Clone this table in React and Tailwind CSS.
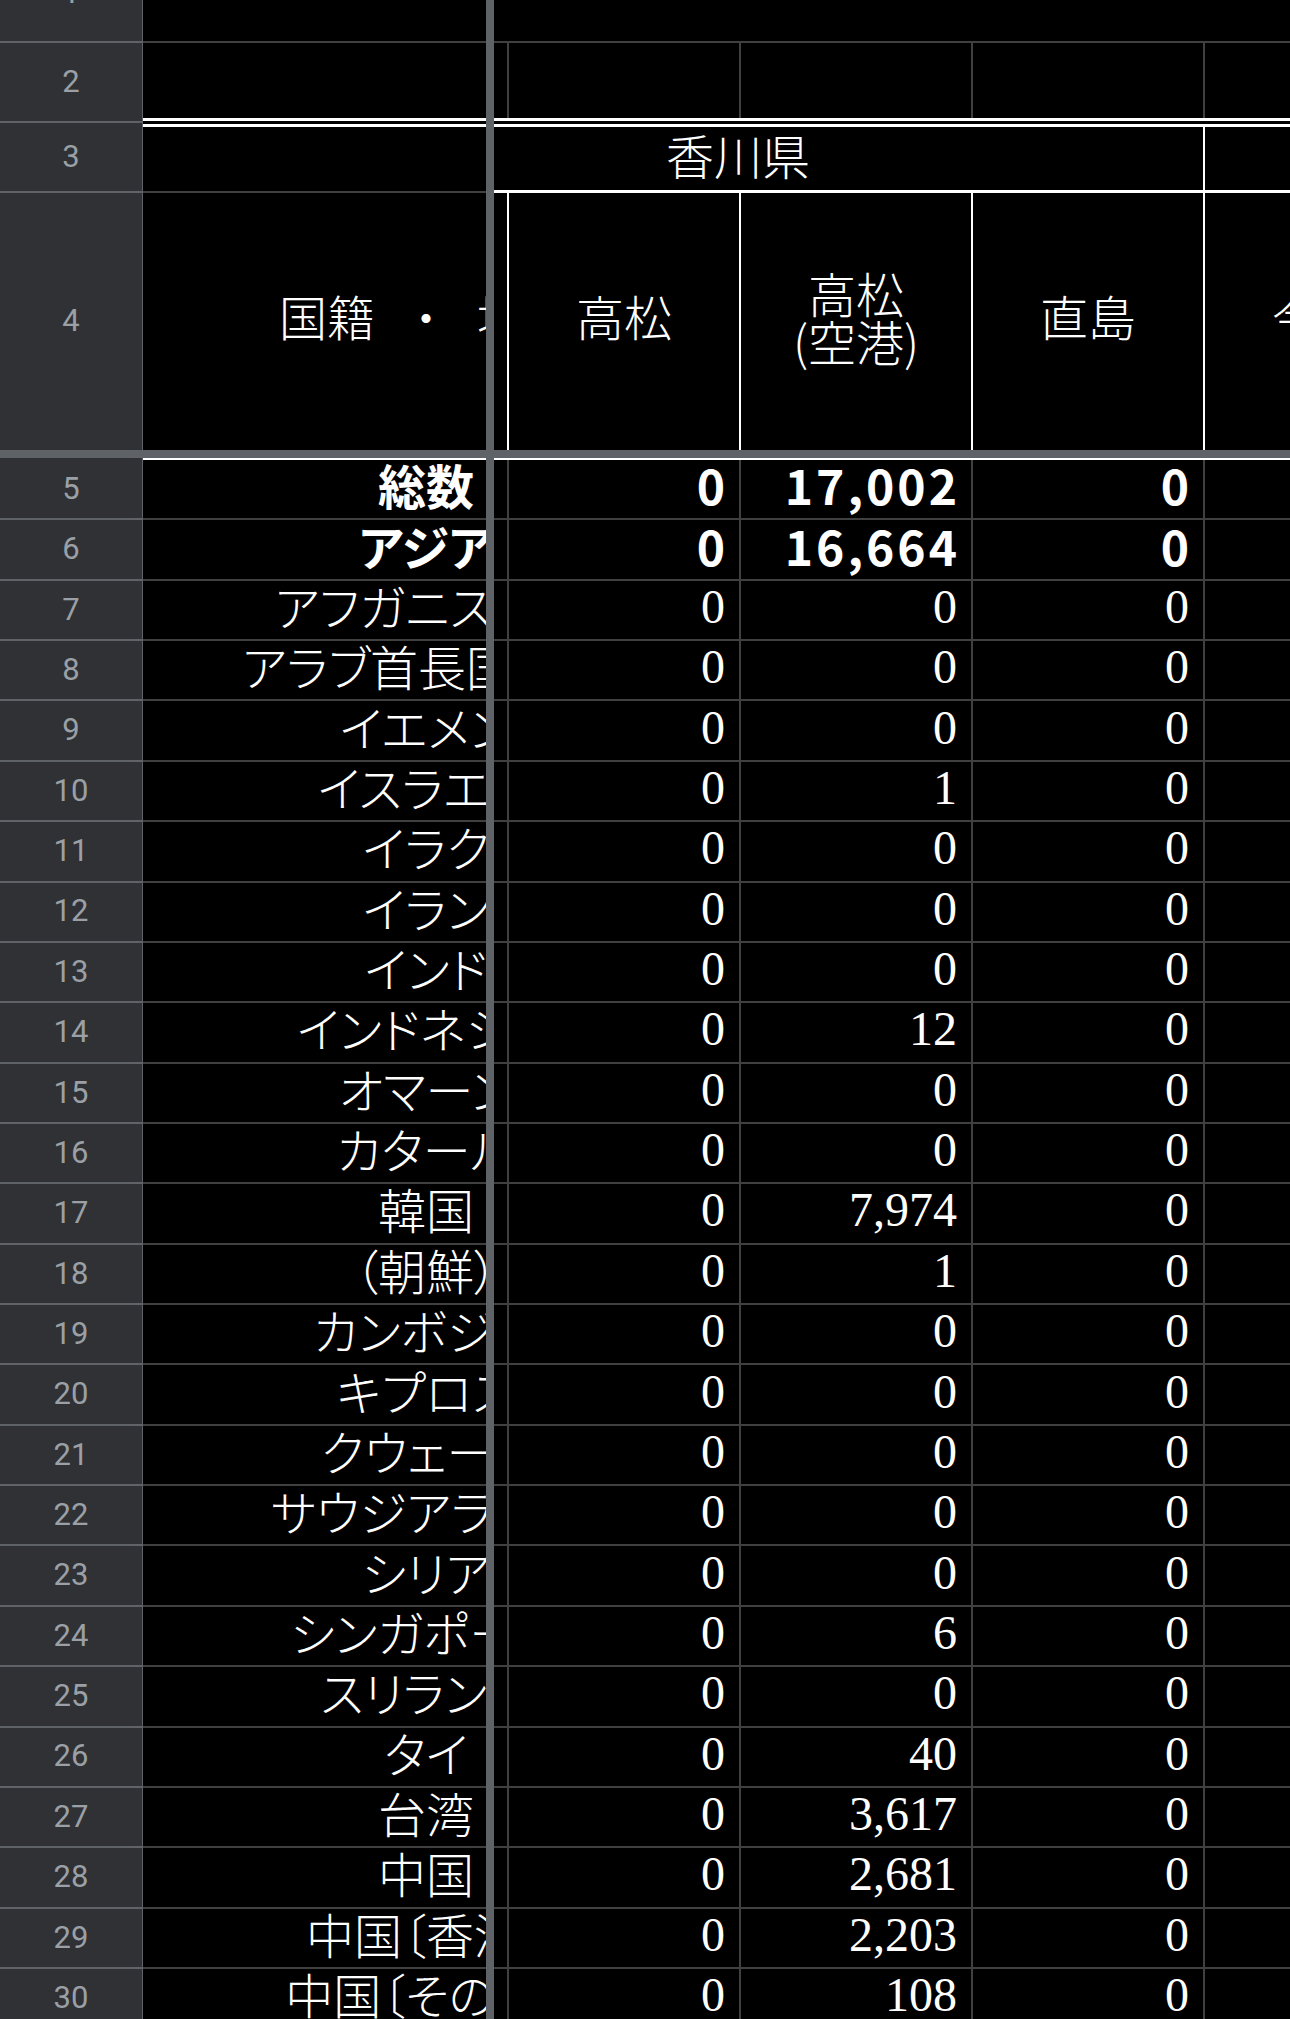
const rows = [
  { n: 5, label: '総数', v: ['0', '17,002', '0'], bold: true },
  { n: 6, label: 'アジア', v: ['0', '16,664', '0'], bold: true },
  { n: 7, label: 'アフガニスタン', v: ['0', '0', '0'] },
  { n: 8, label: 'アラブ首長国連邦', v: ['0', '0', '0'] },
  { n: 9, label: 'イエメン', v: ['0', '0', '0'] },
  { n: 10, label: 'イスラエル', v: ['0', '1', '0'] },
  { n: 11, label: 'イラク', v: ['0', '0', '0'] },
  { n: 12, label: 'イラン', v: ['0', '0', '0'] },
  { n: 13, label: 'インド', v: ['0', '0', '0'] },
  { n: 14, label: 'インドネシア', v: ['0', '12', '0'] },
  { n: 15, label: 'オマーン', v: ['0', '0', '0'] },
  { n: 16, label: 'カタール', v: ['0', '0', '0'] },
  { n: 17, label: '韓国', v: ['0', '7,974', '0'] },
  { n: 18, label: '（朝鮮）', v: ['0', '1', '0'] },
  { n: 19, label: 'カンボジア', v: ['0', '0', '0'] },
  { n: 20, label: 'キプロス', v: ['0', '0', '0'] },
  { n: 21, label: 'クウェート', v: ['0', '0', '0'] },
  { n: 22, label: 'サウジアラビア', v: ['0', '0', '0'] },
  { n: 23, label: 'シリア', v: ['0', '0', '0'] },
  { n: 24, label: 'シンガポール', v: ['0', '6', '0'] },
  { n: 25, label: 'スリランカ', v: ['0', '0', '0'] },
  { n: 26, label: 'タイ', v: ['0', '40', '0'] },
  { n: 27, label: '台湾', v: ['0', '3,617', '0'] },
  { n: 28, label: '中国', v: ['0', '2,681', '0'] },
  { n: 29, label: '中国〔香港〕', v: ['0', '2,203', '0'] },
  { n: 30, label: '中国〔その他〕', v: ['0', '108', '0'] },
]

const jp = "[font-family:'Noto_Sans_CJK_JP',sans-serif] [font-feature-settings:'palt']"

function Head({ n, last }) {
  return (
    <div className={`w-[143px] shrink-0 bg-[#303134] border-r border-[#5f6368] flex items-center justify-center text-[31px] text-[#9aa0a6] [font-family:Roboto,sans-serif] ${last ? '' : 'border-b-2'}`}>
      {n}
    </div>
  )
}

function Divider() {
  return <div className="w-[8px] shrink-0 bg-[#5f6368]" />
}

export default function App() {

  return (

    <div className="w-[1290px] h-[2019px] overflow-hidden bg-black text-white">

      <div className="-mt-[54px] w-max">

        {/* row 1 */}
        <div className="flex h-[97px]">
          <Head n={1} />
          <div className="w-[343px] shrink-0 border-b-2 border-[#404040]" />
          <Divider />
          <div className="w-[941px] shrink-0 border-b-2 border-[#404040]" />
        </div>

        {/* row 2 */}
        <div className="flex h-[80px]">
          <Head n={2} />
          <div className="w-[343px] shrink-0 flex flex-col">
            <div className="flex-1" />
            <div className="h-[3px] bg-white" />
            <div className="h-[2px]" />
          </div>
          <Divider />
          <div className="w-[941px] shrink-0 flex flex-col">
            <div className="flex-1 flex">
              <div className="w-[13px] shrink-0" />
              <div className="w-[232px] shrink-0 border-l-2 border-[#404040]" />
              <div className="w-[232px] shrink-0 border-l-2 border-[#404040]" />
              <div className="w-[232px] shrink-0 border-l-2 border-[#404040]" />
              <div className="w-[232px] shrink-0 border-l-2 border-[#404040]" />
            </div>
            <div className="h-[3px] bg-white" />
            <div className="h-[2px]" />
          </div>
        </div>

        {/* row 3 */}
        <div className="flex h-[70px]">
          <Head n={3} />
          <div className="w-[343px] shrink-0 flex flex-col">
            <div className="h-px" />
            <div className="h-[3px] bg-white" />
            <div className="flex-1" />
            <div className="h-[2px] bg-[#404040]" />
          </div>
          <Divider />
          <div className="w-[941px] shrink-0 flex flex-col">
            <div className="h-px" />
            <div className="h-[3px] bg-white" />
            <div className="flex-1 flex">
              <div className={`w-[711px] shrink-0 border-r-2 border-white flex items-center pl-[172px] pb-[10px] text-[48px] leading-none font-light ${jp}`}>
                香川県
              </div>
              <div className="flex-1" />
            </div>
            <div className="h-[3px] bg-white" />
          </div>
        </div>

        {/* row 4 */}
        <div className="flex h-[257px]">
          <Head n={4} last />
          <div className="w-[343px] shrink-0 overflow-hidden">
            <div className={`w-[566px] h-full flex items-center justify-center pb-[14px] text-[48px] leading-none font-light whitespace-nowrap ${jp}`}>
              国籍<span className="inline-block w-[102px] text-center">・</span>地域
            </div>
          </div>
          <Divider />
          <div className={`w-[941px] shrink-0 flex text-[48px] font-light ${jp}`}>
            <div className="w-[13px] shrink-0" />
            <div className="w-[232px] shrink-0 border-l-2 border-white flex items-center justify-center pb-[14px] leading-none">
              高松
            </div>
            <div className="w-[232px] shrink-0 border-l-2 border-white flex flex-col items-center justify-center leading-[48px] pb-[12px]">
              <span>高松</span>
              <span>(空港)</span>
            </div>
            <div className="w-[232px] shrink-0 border-l-2 border-white flex items-center justify-center pb-[14px] leading-none">
              直島
            </div>
            <div className="w-[232px] shrink-0 border-l-2 border-white flex items-center justify-center pb-[14px] leading-none">
              今治
            </div>
          </div>
        </div>

        {/* frozen rows divider */}
        <div className="h-[8px] w-[1435px] bg-[#5f6368]" />

        <div className="flex h-[2px]">
          <div className="w-[143px] shrink-0 bg-[#303134] border-r border-[#5f6368]" />
          <div className="w-[343px] shrink-0 bg-white" />
          <Divider />
          <div className="w-[941px] shrink-0 bg-white" />
        </div>

        {

          rows.map(row=>(

            <div key={row.n} className="flex h-[60.36px]">

              <Head n={row.n} />

              <div className="w-[343px] shrink-0 overflow-hidden border-b-2 border-[#404040]">
                <div className={`w-[566px] h-full flex items-center justify-center pb-[10px] text-[48px] leading-none whitespace-nowrap ${jp} ${row.bold ? 'font-bold' : 'font-light'}`}>
                  {row.label}
                </div>
              </div>

              <Divider />

              <div className="w-[941px] shrink-0 flex border-b-2 border-[#404040]">
                <div className="w-[13px] shrink-0" />
                {

                  row.v.map((val,i)=>(

                    <div
                      key={i}
                      className={
                        row.bold
                          ? "w-[232px] shrink-0 border-l-2 border-[#404040] flex items-center justify-end pr-[11px] pb-[10px] text-[48px] leading-none font-bold tracking-[3px] [font-family:'Noto_Sans_CJK_JP',sans-serif]"
                          : "w-[232px] shrink-0 border-l-2 border-[#404040] flex items-center justify-end pr-[14px] pb-[6px] text-[48px] leading-none [font-family:'Liberation_Serif',serif]"
                      }
                    >
                      {val}
                    </div>

                  ))

                }
                <div className="w-[232px] shrink-0 border-l-2 border-[#404040]" />
              </div>

            </div>

          ))

        }

      </div>

    </div>

  )

}
